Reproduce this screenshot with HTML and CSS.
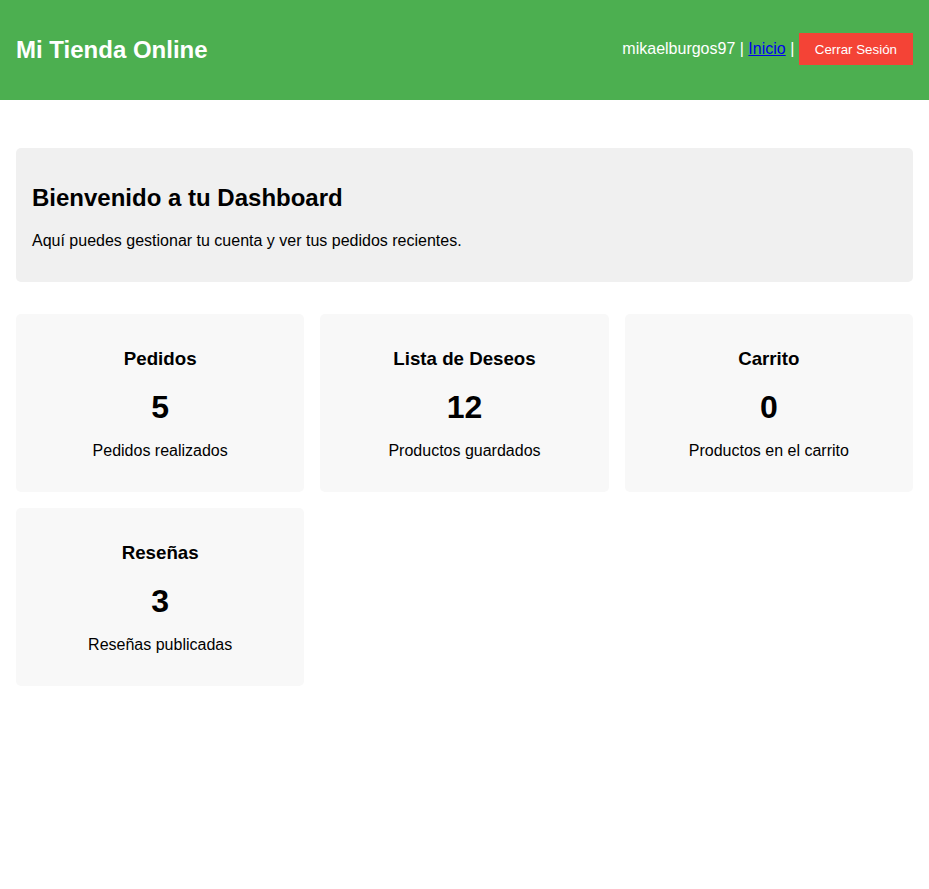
FILE: index.html
```html
<!DOCTYPE html>
<html lang="es">
<head>
<meta charset="utf-8">
<title>Dashboard - Mi Tienda Online</title>
<link rel="stylesheet" href="styles.css">
</head>
<body>
<header class="site-header">
  <h1 class="brand">Mi Tienda Online</h1>
  <nav class="user-nav">
    <span>mikaelburgos97 | <a href="#">Inicio</a> | </span>
    <button class="logout">Cerrar Sesión</button>
  </nav>
</header>
<main class="main">
  <section class="welcome">
    <h2>Bienvenido a tu Dashboard</h2>
    <p>Aquí puedes gestionar tu cuenta y ver tus pedidos recientes.</p>
  </section>
  <section class="cards">
    <div class="card">
      <h3>Pedidos</h3>
      <p class="num">5</p>
      <p class="desc">Pedidos realizados</p>
    </div>
    <div class="card">
      <h3>Lista de Deseos</h3>
      <p class="num">12</p>
      <p class="desc">Productos guardados</p>
    </div>
    <div class="card">
      <h3>Carrito</h3>
      <p class="num">0</p>
      <p class="desc">Productos en el carrito</p>
    </div>
    <div class="card">
      <h3>Reseñas</h3>
      <p class="num">3</p>
      <p class="desc">Reseñas publicadas</p>
    </div>
  </section>
</main>
</body>
</html>
```
FILE: styles.css
```css
* { box-sizing: border-box; }
body {
  margin: 0;
  font-family: "Liberation Sans", Arial, sans-serif;
  font-size: 16px;
  color: #000;
  background: #fff;
}
.site-header {
  background: #4caf50;
  color: #fff;
  height: 100px;
  padding: 0 16px;
  display: flex;
  align-items: center;
  justify-content: space-between;
}
.brand {
  margin: 0;
  font-size: 24px;
  line-height: 28px;
  font-weight: bold;
}
.user-nav {
  display: flex;
  align-items: center;
  font-size: 16px;
  white-space: pre;
  margin-top: -2px;
}
.user-nav a { color: #0000ee; text-decoration: underline; }
.logout {
  background: #f44336;
  color: #fff;
  border: none;
  font-family: "Liberation Sans", Arial, sans-serif;
  font-size: 13.33px;
  line-height: 15px;
  padding: 8px 16px;
  height: 32px;
  cursor: pointer;
}
.main {
  padding: 48px 16px 16px;
}
.welcome {
  background: #f0f0f0;
  border-radius: 5px;
  padding: 16px;
}
.welcome h2 {
  margin: 20px 0;
  font-size: 24px;
  line-height: 28px;
}
.welcome p {
  margin: 0 0 16px;
  line-height: 18px;
}
.cards {
  margin-top: 32px;
  display: grid;
  grid-template-columns: repeat(3, 1fr);
  gap: 16px;
}
.card {
  background: #f8f8f8;
  border-radius: 5px;
  padding: 16px;
  text-align: center;
  height: 178px;
}
.card h3 {
  margin: 18px 0 0;
  font-size: 18.72px;
  line-height: 22px;
}
.card .num {
  margin: 19px 0 0;
  font-size: 32px;
  font-weight: bold;
  line-height: 37px;
}
.card .desc {
  margin: 16px 0 0;
  line-height: 18px;
}
```
